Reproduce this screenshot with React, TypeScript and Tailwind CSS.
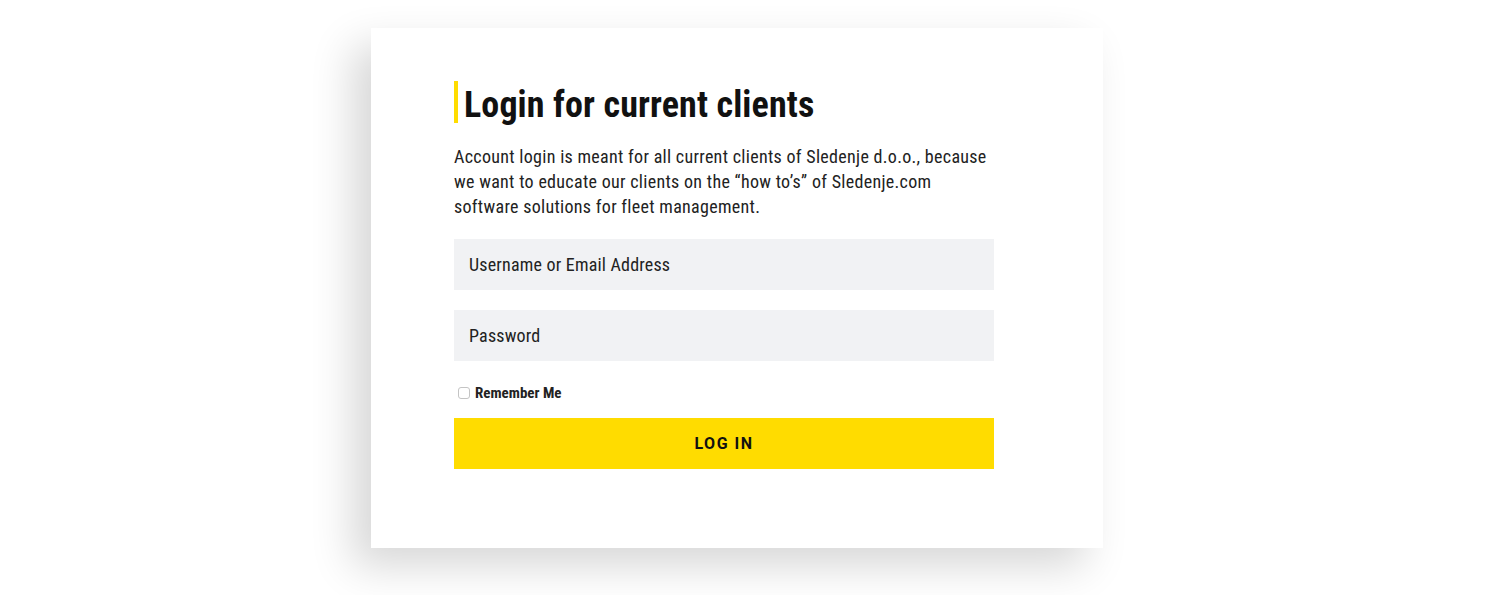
import React from "react";

export default function App() {
  return (
    <div className="w-[1500px] h-[595px] bg-white overflow-hidden" style={{ fontFamily: '"Roboto Condensed", Roboto, "Liberation Sans", sans-serif' }}>
      <div className="pt-[28px] pl-[371px]">
        <div className="w-[732px] h-[520px] bg-white pl-[83px] pt-[53px] shadow-[-18px_18px_40px_rgba(0,0,0,0.16)]">
          <div className="w-[540px]">
            <h1 className="border-l-4 border-[#ffdc00] pl-[6px] pt-[6px] text-[36px] leading-[36px] tracking-[0.12px] font-bold text-[#111]">
              Login for current clients
            </h1>
            <p className="mt-[21px] text-[18px] leading-[25px] tracking-[0.3px] text-[#222]">
              Account login is meant for all current clients of Sledenje d.o.o., because we want to educate our clients on the “how to’s” of Sledenje.com software solutions for fleet management.
            </p>
            <div className="mt-[20px] h-[51px] bg-[#f1f2f4] flex items-center px-[15px] text-[18px] tracking-[0.2px] text-[#222]">
              Username or Email Address
            </div>
            <div className="mt-[20px] h-[51px] bg-[#f1f2f4] flex items-center px-[15px] text-[18px] tracking-[0.2px] text-[#222]">
              Password
            </div>
            <div className="mt-[24px] flex items-center h-[16px] pl-[4px]">
              <span className="w-[12px] h-[12px] border border-[#c4c4c4] rounded-[3px] bg-white"></span>
              <span className="ml-[5px] text-[15px] font-bold text-[#222]">Remember Me</span>
            </div>
            <div className="mt-[17px] h-[51px] bg-[#ffdc00] flex items-center justify-center">
              <span className="text-[16px] font-bold tracking-[1.5px] text-[#111]" style={{ fontFamily: 'Roboto, "Liberation Sans", sans-serif' }}>LOG IN</span>
            </div>
          </div>
        </div>
      </div>
    </div>
  );
}
